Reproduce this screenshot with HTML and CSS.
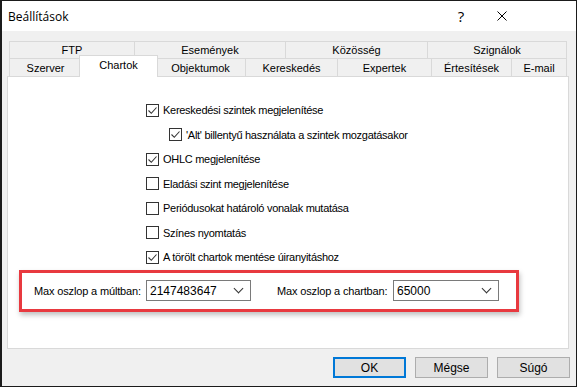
FILE: index.html
```html
<!DOCTYPE html>
<html lang="hu">
<head>
    <meta charset="UTF-8">
    <title>Beállítások</title>
    <link rel="stylesheet" href="styles.css">
</head>
<body>

<div class="window">
    <!-- Barre de titre -->
    <div class="titlebar">
        <span class="title">Beállítások</span>
        <span class="help">?</span>
        <span class="close">
            <svg width="10" height="10" viewBox="0 0 10 10"><path d="M0.5 0.5 L9.5 9.5 M9.5 0.5 L0.5 9.5" stroke="#000" stroke-width="1"/></svg>
        </span>
    </div>

    <div class="content">
        <!-- Onglets -->
        <div class="tabs">
            <div class="tabrow">
                <div class="tab w-ftp">FTP</div>
                <div class="tab w-esem">Események</div>
                <div class="tab w-koz">Közösség</div>
                <div class="tab w-szig">Szignálok</div>
            </div>
            <div class="tabrow front">
                <div class="tab w-szer">Szerver</div>
                <div class="tab active">Chartok</div>
                <div class="tab w-obj">Objektumok</div>
                <div class="tab w-ker">Kereskedés</div>
                <div class="tab w-exp">Expertek</div>
                <div class="tab w-ert">Értesítések</div>
                <div class="tab w-mail">E-mail</div>
            </div>
        </div>

        <!-- Panneau Chartok -->
        <div class="panel">
            <div class="options">
                <label class="opt"><span class="box checked"></span>Kereskedési szintek megjelenítése</label>
                <label class="opt sub"><span class="box checked"></span>'Alt' billentyű használata a szintek mozgatásakor</label>
                <label class="opt"><span class="box checked"></span>OHLC megjelenítése</label>
                <label class="opt"><span class="box"></span>Eladási szint megjelenítése</label>
                <label class="opt"><span class="box"></span>Periódusokat határoló vonalak mutatása</label>
                <label class="opt"><span class="box"></span>Színes nyomtatás</label>
                <label class="opt"><span class="box checked"></span>A törölt chartok mentése úiranyitáshoz</label>
            </div>

            <div class="highlight">
                <span class="field-label">Max oszlop a múltban:</span>
                <div class="combo c-hist"><span>2147483647</span><i class="chev"></i></div>
                <span class="field-label l-chart">Max oszlop a chartban:</span>
                <div class="combo c-chart"><span>65000</span><i class="chev"></i></div>
            </div>
        </div>

        <!-- Boutons -->
        <div class="buttons">
            <button class="btn default">OK</button>
            <button class="btn">Mégse</button>
            <button class="btn">Súgó</button>
        </div>
    </div>
</div>

</body>
</html>
```

FILE: styles.css
```css
body {
    margin: 0;
    padding: 1px 1px 1px 2px;
    background: #1b1b1b;
    font-family: 'Liberation Sans', Arial, sans-serif;
    font-size: 11px;
    color: #000;
}

.window {
    width: 574px;
    height: 385px;
    display: flex;
    flex-direction: column;
    background: #f0f0f0;
}

/* Barre de titre */
.titlebar {
    height: 30px;
    background: #ffffff;
    display: flex;
    align-items: center;
    font-family: 'Open Sans', 'Noto Sans', sans-serif;
    font-size: 12px;
}
.title {
    padding-left: 6px;
    flex: 1;
}
.help {
    font-size: 15px;
    width: 20px;
    text-align: center;
    margin-right: 26px;
}
.close {
    width: 10px;
    height: 10px;
    margin-right: 69px;
    display: flex;
}

.content {
    flex: 1;
    padding: 10px 6px 0 5px;
    display: flex;
    flex-direction: column;
}

/* Onglets */
.tabs {
    padding-left: 2px;
}
.tabrow {
    display: flex;
    height: 17px;
}
.tabrow.front {
    height: 18px;
    align-items: flex-end;
}
.tab {
    box-sizing: border-box;
    height: 17px;
    border: 1px solid #d9d9d9;
    border-bottom: none;
    margin-right: -1px;
    background: #f0f0f0;
    display: flex;
    align-items: center;
    justify-content: center;
}
.tabrow.front .tab {
    height: 18px;
}
.tab.active {
    position: relative;
    z-index: 2;
    background: #fff;
    width: 79px;
    height: 22px !important;
    margin: 0 -3px -1px -2px;
    align-items: flex-start;
    padding-top: 3px;
}
.w-ftp { width: 126px; }
.w-esem { width: 152px; }
.w-koz { width: 143px; }
.w-szig { width: 140px; }
.w-szer { width: 73px; }
.w-obj { width: 91px; }
.w-ker { width: 93px; }
.w-exp { width: 95px; }
.w-ert { width: 81px; }
.w-mail { width: 56px; }

/* Panneau */
.panel {
    box-sizing: border-box;
    width: 562px;
    height: 273px;
    background: #fff;
    border: 1px solid #d9d9d9;
    padding: 21px 0 0 11px;
}
.options {
    padding-left: 127px;
}
.opt {
    display: flex;
    align-items: center;
    height: 24.5px;
    letter-spacing: -0.28px;
}
.opt.sub {
    padding-left: 23px;
}
.box {
    box-sizing: border-box;
    width: 13px;
    height: 13px;
    border: 1px solid #333;
    margin-right: 4px;
    background: #fff;
}
.box.checked {
    background: #fff url("data:image/svg+xml;utf8,<svg xmlns='http://www.w3.org/2000/svg' width='11' height='11'><path d='M1.5 5.5 L4.3 8.3 L9.5 2.5' fill='none' stroke='%23333' stroke-width='1.1'/></svg>") no-repeat center;
}

/* Zone encadrée */
.highlight {
    box-sizing: border-box;
    width: 500px;
    height: 42px;
    margin-top: 0;
    border: 3px solid #e8393f;
    box-shadow: 1px 3px 5px rgba(0, 0, 0, 0.25);
    display: flex;
    align-items: center;
    padding-left: 12px;
}
.field-label {
    width: 112px;
    letter-spacing: -0.15px;
}
.l-chart {
    margin-left: 26px;
    width: 116px;
}
.combo {
    box-sizing: border-box;
    height: 21px;
    border: 1px solid #7a7a7a;
    background: #fff;
    display: flex;
    align-items: center;
    padding-left: 3px;
    font-size: 12px;
}
.combo span {
    flex: 1;
}
.c-hist { width: 105px; }
.c-chart { width: 106px; }
.chev {
    width: 6px;
    height: 6px;
    border-right: 1px solid #333;
    border-bottom: 1px solid #333;
    transform: rotate(45deg);
    margin: 0 8px 4px 0;
}

/* Boutons */
.buttons {
    display: flex;
    justify-content: flex-end;
    gap: 9px;
    margin-top: 8px;
    padding-right: 0;
}
.btn {
    box-sizing: border-box;
    width: 73px;
    height: 21px;
    background: #e1e1e1;
    border: 1px solid #adadad;
    font-family: 'Liberation Sans', Arial, sans-serif;
    font-size: 12px;
    color: #000;
    padding: 0;
}
.btn.default {
    border: 2px solid #0078d7;
}
```
